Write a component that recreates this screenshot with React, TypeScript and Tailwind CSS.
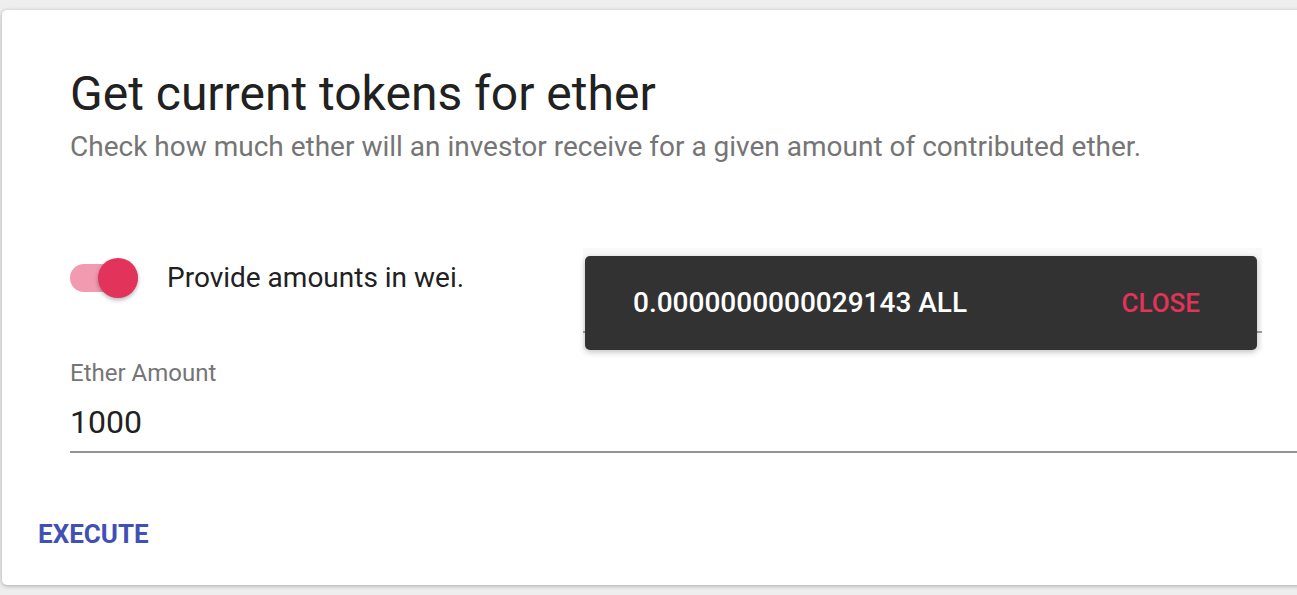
import React from "react";

function Toggle() {
  return (
    <div className="relative w-[68px] h-[40px] shrink-0">
      <div className="absolute left-0 top-[6px] h-[28px] w-[68px] rounded-full bg-[#f19ab0]" />
      <div className="absolute right-0 top-0 h-[40px] w-[40px] rounded-full bg-[#e2335a] shadow-[0_2px_4px_rgba(0,0,0,0.3)]" />
    </div>
  );
}

export default function App() {
  return (
    <div className="h-[595px] overflow-hidden bg-[#eeeeee] pt-[10px] pl-[2px] font-['Roboto',sans-serif]">
      <div className="relative h-[575px] w-[1340px] rounded-[5px] bg-white shadow-[0_1px_4px_rgba(0,0,0,0.3)]">
        <div className="pl-[68px] pt-[56px]">
          <h1 className="text-[48px] leading-[56px] text-[#212121]">Get current tokens for ether</h1>
          <p className="mt-[7px] text-[28px] leading-[36px] text-[#757575]">
            Check how much ether will an investor receive for a given amount of contributed ether.
          </p>

          <div className="mt-[83px] flex items-start">
            <div className="flex w-[513px] items-center gap-[29px] pt-[10px]">
              <Toggle />
              <span className="text-[28px] leading-[36px] text-[#212121]">Provide amounts in wei.</span>
            </div>
            <div className="relative h-[102px] w-[679px] bg-[#f9f9f9]">
              <div className="absolute bottom-[17px] left-0 right-0 h-[2px] bg-[#9e9e9e]" />
              <div className="absolute left-[2px] right-[5px] top-[8px] bottom-0 flex items-center justify-between rounded-[5px] bg-[#323232] pl-[48px] pr-[57px] shadow-[0_2px_6px_rgba(0,0,0,0.25)]">
                <span className="text-[28px] font-medium text-white">0.0000000000029143 ALL</span>
                <span className="text-[26px] font-medium text-[#e2335a]">CLOSE</span>
              </div>
            </div>
          </div>

          <div className="mt-[9px]">
            <div className="text-[24px] leading-[28px] text-[#757575]">Ether Amount</div>
            <div className="mt-[17px] border-b-2 border-[#949494] pb-[11px] text-[32px] leading-[36px] text-[#212121]">
              1000
            </div>
          </div>
        </div>
        <div className="pl-[36px] pt-[65px]">
          <span className="text-[26px] leading-[32px] font-bold text-[#3f51b5]">EXECUTE</span>
        </div>
      </div>
    </div>
  );
}
